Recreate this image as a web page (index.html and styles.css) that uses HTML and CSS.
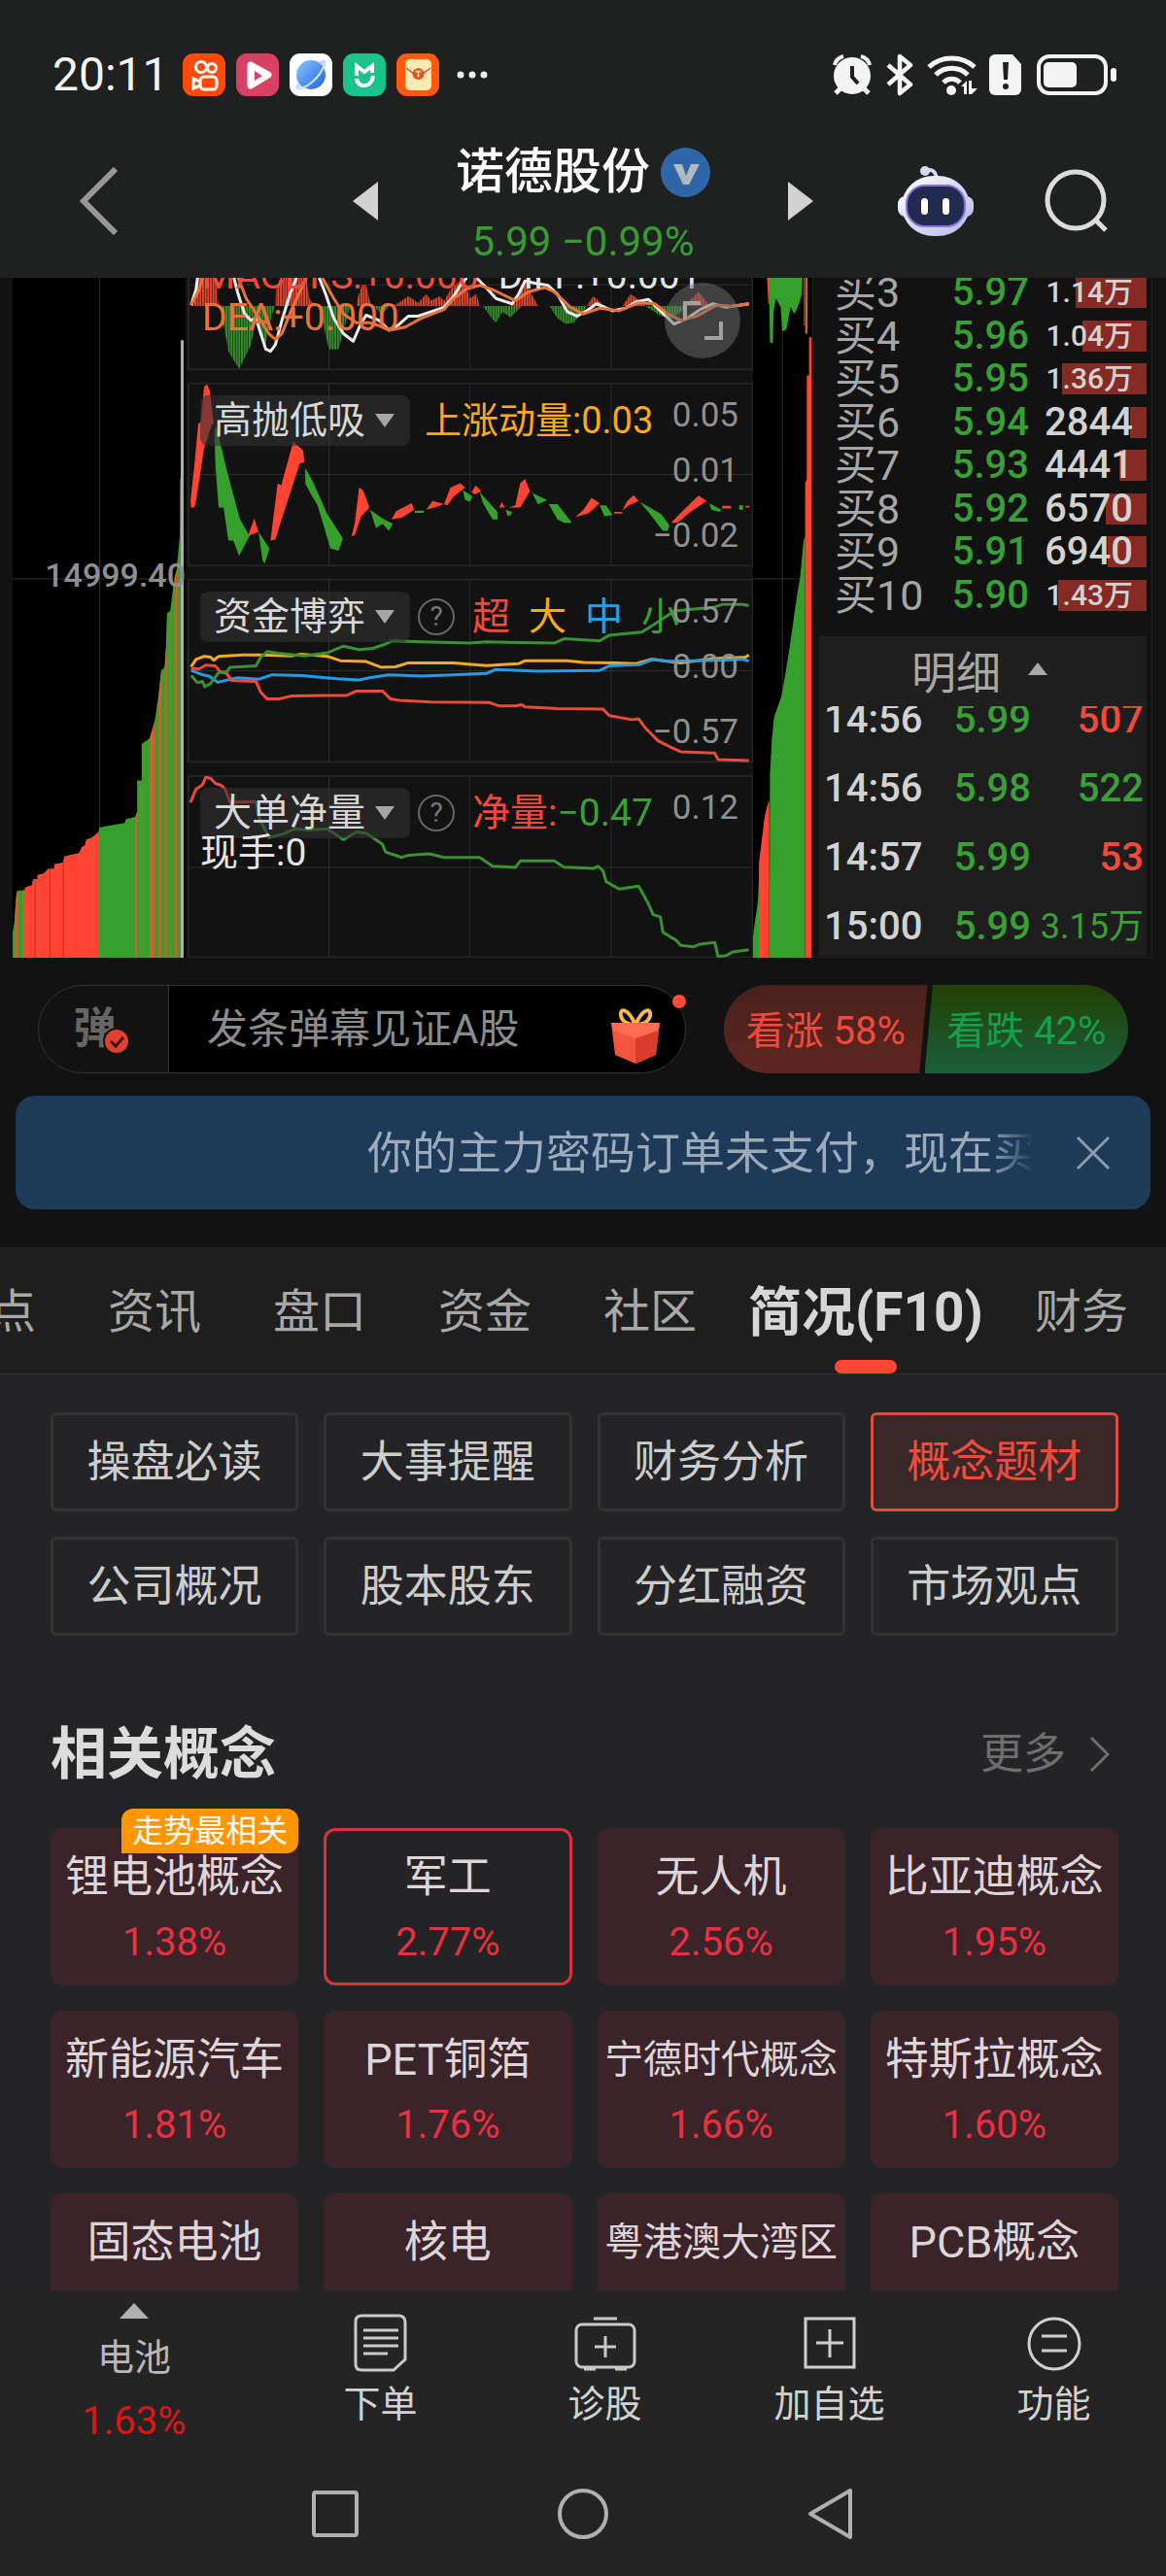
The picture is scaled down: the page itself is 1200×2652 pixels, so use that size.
FILE: index.html
```html
<!DOCTYPE html>
<html lang="zh-CN">
<head>
<meta charset="utf-8">
<meta name="viewport" content="width=device-width, initial-scale=1">
<title>诺德股份</title>
<link rel="stylesheet" href="styles.css">
</head>
<body>
<div class="top">
  <div class="status">
    <span class="clock">20:11</span>
    <svg class="app" viewBox="0 0 44 44"><rect width="44" height="44" rx="11" fill="#ff4a0a"/><g fill="none" stroke="#fff" stroke-width="3"><circle cx="19" cy="14" r="5.5"/><circle cx="30" cy="15" r="4.5"/><rect x="18" y="24" width="17" height="13" rx="4"/><path d="M18 29l-7-3v10l7-3"/></g></svg>
    <svg class="app" viewBox="0 0 44 44"><rect width="44" height="44" rx="11" fill="#d94164"/><path d="M15 12l18 10-18 11z" fill="#fff" stroke="#fff" stroke-width="7" stroke-linejoin="round"/><path d="M19 18l8 5-8 5z" fill="#d94164"/></svg>
    <svg class="app" viewBox="0 0 44 44"><defs><linearGradient id="globe" x1="0" y1="0" x2="1" y2="1"><stop offset="0" stop-color="#8cc8fb"/><stop offset="1" stop-color="#1c62e4"/></linearGradient></defs><rect width="44" height="44" rx="11" fill="#fff"/><ellipse cx="22" cy="22" rx="21" ry="6" transform="rotate(-45 22 22)" fill="#c6dbfb"/><circle cx="22" cy="22" r="15" fill="url(#globe)"/><path d="M9 36c10 0 22-12 27-24" fill="none" stroke="#cfe2ff" stroke-width="2"/></svg>
    <svg class="app" viewBox="0 0 44 44"><rect width="44" height="44" rx="11" fill="#1ac389"/><path d="M14 23V13l8 6 8-6v7M14 26c1 10 16 10 17-3" fill="none" stroke="#fff" stroke-width="4"/></svg>
    <svg class="app" viewBox="0 0 44 44"><rect width="44" height="44" rx="11" fill="#ff5a0c"/><rect x="9" y="6" width="27" height="32" rx="5" fill="#ffeab5"/><path d="M10 15l9 7h7l9-7" fill="none" stroke="#d9541c" stroke-width="1.5"/><circle cx="22.500" cy="21" r="6" fill="#e0531a"/><path d="M19.500 18.500h6M22.500 18.500v6" stroke="#ffeab5" stroke-width="1.500"/></svg>
    <svg class="dots" viewBox="0 0 32 8" fill="#f2f2f2"><circle cx="4" cy="4" r="3.500"/><circle cx="16" cy="4" r="3.500"/><circle cx="28" cy="4" r="3.500"/></svg>
    <svg class="sys" viewBox="0 0 292 44" fill="#f4f4f4">
      <circle cx="20" cy="23" r="19"/><path d="M2 12a12 12 0 0 1 9-9M29 3a12 12 0 0 1 9 9" fill="none" stroke="#f4f4f4" stroke-width="4"/><path d="M8 36l-5 5M32 36l5 5" stroke="#f4f4f4" stroke-width="5"/><path d="M20 13v11l6 7" fill="none" stroke="#1f2120" stroke-width="4"/>
      <path d="M57 12l23 20-11 9V3l11 9-23 20" fill="none" stroke="#f4f4f4" stroke-width="4.500" stroke-linejoin="round"/>
      <g fill="none" stroke="#f4f4f4" stroke-width="5"><path d="M99 14c13-12 34-12 47 0M106 22c9-9 24-9 33 0M114 30c5-5 12-5 17 0"/></g><circle cx="122" cy="38" r="5"/><path d="M132 34l6-6v14h-3v-8zM140 28h3v8h6l-6 6h-3z"/>
      <path d="M167 1h18l9 10v26a6 6 0 0 1-6 6h-21a6 6 0 0 1-6-6V7a6 6 0 0 1 6-6z"/><path d="M175 9h6l-1 18h-4z" fill="#1f2120"/><circle cx="178" cy="34" r="3" fill="#1f2120"/>
      <rect x="212" y="3" width="69" height="38" rx="11" fill="none" stroke="#f4f4f4" stroke-width="4"/><rect x="217" y="9" width="34" height="26" rx="5"/><rect x="286" y="15" width="6" height="14" rx="3"/>
    </svg>
  </div>
  <header class="header">
    <button class="icon-btn back" aria-label="返回"><svg width="40" height="70" viewBox="0 0 40 70" fill="none" stroke="#979797" stroke-width="6"><path d="M37 2L4 35l33 33"/></svg></button>
    <div class="stock">
      <button class="icon-btn" aria-label="上一只"><svg width="26" height="40" viewBox="0 0 26 40"><path d="M26 0v40L0 20z" fill="#d2d2d2"/></svg></button>
      <div class="stock-name">
        <h1>诺德股份<svg width="51" height="51" viewBox="0 0 51 51"><circle cx="25.500" cy="25.500" r="25.500" fill="#2f66a8"/><path d="M13 17h9l4 12 5-12h9L29 38h-6z" fill="#b3b8bc"/></svg></h1>
        <p class="quote">5.99 −0.99%</p>
      </div>
      <button class="icon-btn" aria-label="下一只"><svg width="26" height="40" viewBox="0 0 26 40"><path d="M0 0v40l26-20z" fill="#d2d2d2"/></svg></button>
    </div>
    <div class="tools">
      <button class="icon-btn" aria-label="助手"><svg width="78" height="74" viewBox="0 0 78 74"><defs><linearGradient id="bot" x1="0" y1="0" x2="1" y2="1"><stop offset="0" stop-color="#fff"/><stop offset="1" stop-color="#b9b6ec"/></linearGradient></defs><circle cx="28" cy="6" r="5" fill="#d9d8f2"/><path d="M28 6c8-3 11 1 12 8" fill="none" stroke="#d9d8f2" stroke-width="4"/><rect x="0" y="32" width="78" height="21" rx="8" fill="url(#bot)"/><rect x="4" y="11" width="70" height="62" rx="33" fill="url(#bot)"/><rect x="9" y="21" width="60" height="42" rx="19" fill="#232a50" stroke="#8674de" stroke-width="2"/><rect x="24" y="34" width="7" height="17" rx="3.500" fill="#fff"/><rect x="46" y="34" width="7" height="17" rx="3.500" fill="#fff"/></svg></button>
      <button class="icon-btn" aria-label="搜索"><svg width="66" height="66" viewBox="0 0 66 66" fill="none" stroke="#dcdcdc" stroke-width="5"><circle cx="32" cy="32" r="29"/><path d="M52 52l11 11"/></svg></button>
    </div>
  </header>
</div>

<main>
<section class="charts">
  <div class="depth depth-left">
    <svg viewBox="40 13 533 1545" preserveAspectRatio="none">
      <clipPath id="stairs"><path d="M40 1558V1500L45 1480 52 1410 57 1405H75L80 1398 100 1393 103 1380H117V1370L135 1367 150 1356H167L170 1345 195 1342 200 1328 245 1320 252 1308 263 1302 267 1290 285 1285 305 1272 307 1262 345 1257 385 1252 390 1243 418 1238 424 1225V1155H438V1072L462 1060 468 1045 478 1020 484 990 490 960 498 905 508 898 513 850 516 775 526 770 533 725 540 690 545 680 550 640 555 600 556 470H558V1558z"/></clipPath>
      <path class="grid" d="M308 13V1558M40 697H573"/>
      <g clip-path="url(#stairs)">
        <path fill="#35a02b" d="M40 400H560V1558H40z"/>
        <path fill="#ff4433" d="M75 400H305V1558H75z"/>
        <path fill="#c9622f" d="M46 400h11v1158h-11zM70 400h5v1158h-5zM417 400h8v1158h-8zM436 400h3v1158h-3zM459 400h4v1158h-4zM488 400h11v1158h-11zM510 400h6v1158h-6zM524 400h3v1158h-3zM539 400h9v1158h-9zM474 400h5v1158h-5z"/>
        <path fill="#f2553a" d="M465 400h8v1158h-8z"/>
        <path fill="#b93228" d="M108 400h3v1158h-3zM153 400h3v1158h-3zM195 400h3v1158h-3z"/>
      </g>
      <path fill="#adadad" d="M558 155h9V1558h-9z"/>
    </svg>
    <span class="depth-value">14999.40</span>
  </div>

  <div class="panels">
    <svg class="plot" viewBox="579 13 1744 1545" preserveAspectRatio="none">
      <defs>
        <pattern id="rb" width="8" height="20" patternUnits="userSpaceOnUse"><path fill="#e8452f" d="M0 0h6v20H0z"/></pattern>
        <pattern id="gb" width="8" height="20" patternUnits="userSpaceOnUse"><path fill="#35902b" d="M0 0h6v20H0z"/></pattern>
      </defs>
      <path class="grid" d="M1015 13V222M1450 13V222M1885 13V222M1015 253V667M1450 253V667M1885 253V667M1015 699V1113M1450 699V1113M1885 699V1113M1015 1145V1557M1450 1145V1557M1885 1145V1557M579 29H2323M579 460H2323M579 906H2323M579 1353H2323"/>
      <path class="grid frame" d="M582 13V221H2322V13M582 253H2322V667H582zM582 699H2322V1113H582zM582 1145H2322V1557H582z"/>
      <path fill="url(#rb)" d="M590 77L600 50 610 13H665L675 77zM850 77L852 40 865 13H945L955 60 970 77zM1100 77L1105 55 1118 28 1130 30 1145 77zM1215 77L1260 55 1290 70 1315 50 1330 65 1355 55 1370 65 1395 35 1430 13 1450 60 1470 50 1480 77zM1575 77L1600 60 1620 20 1640 50 1660 77zM1810 77L1830 55 1855 70 1860 77zM1920 77L1945 50 1985 70 1990 77zM2110 77L2155 45 2190 77z"/>
      <path fill="url(#gb)" d="M680 77L705 180 738 220 775 165 790 110 820 165 830 120 848 77zM985 77L1015 175H1045L1065 120 1080 77zM1150 77L1180 95 1200 77zM1490 77L1520 108 1530 115 1550 90 1575 103 1610 77zM1695 77L1720 105 1745 118 1770 115 1800 90 1810 77zM1990 77L2040 100 2070 105 2100 90 2120 77z"/>
      <g class="line">
        <path stroke="#ececec" d="M590 75L605 40 610 13M722 13L735 50 755 95 775 110 790 105 805 140 820 175 835 180 850 165 870 110 895 50 915 13M985 13L1005 50 1030 105 1060 140 1090 157 1115 115 1130 98 1170 110 1200 132 1230 120 1260 100 1290 100 1370 80 1400 55 1420 30 1440 13M1470 13L1500 35 1530 60 1580 72 1600 50 1620 20 1650 25 1690 30 1720 50 1750 90 1780 100 1810 88 1840 72 1890 88 1930 82 1960 68 2000 62 2040 90 2080 118 2120 105 2160 85 2200 72 2240 80 2310 72"/>
        <path stroke="#ec7138" d="M590 75L615 40 625 13M735 13L760 60 800 105 830 140 850 153 870 140 900 85 935 30 945 13M995 13L1030 60 1060 95 1100 115 1140 115 1170 122 1200 132 1250 125 1300 105 1370 85 1400 60 1440 38 1480 30 1520 40 1590 65 1630 45 1680 35 1710 45 1760 80 1800 95 1850 82 1910 88 1970 70 2020 72 2060 95 2100 110 2150 100 2210 75 2260 78 2310 72"/>
      </g>
      <path fill="#ff4433" d="M590 535L588 520 600 440 612 345 620 340 630 260 640 255 648 270 660 345 655 345 630 400 620 450 605 520 600 535zM765 600L785 560 798 590zM835 610L845 550 857 480 868 485 905 385 935 405 940 432 925 435 870 560 850 608zM1060 605L1085 600 1095 570 1108 490 1120 495 1140 535 1115 555 1095 598zM1208 562L1222 543 1270 525 1278 540 1240 558zM1315 540L1335 520 1360 525 1370 527 1340 535zM1370 527L1390 490 1420 480 1435 490 1400 510 1380 530zM1455 500L1468 485 1485 498 1465 505zM1540 535L1548 523 1558 535zM1570 535L1590 530 1605 480 1620 470 1635 498 1605 535zM1775 557L1800 540 1825 513 1850 525 1815 548zM1895 545h25v4h-25zM1920 542L1935 520 1955 507 1970 520 1940 530zM2070 570L2110 540 2155 508 2180 520 2130 545 2090 570zM2228 531h27v6h-27zM2300 531h12v4h-12z"/>
      <path fill="#35a02b" d="M662 360L668 350 700 450 740 560 770 600 738 645 720 610H705L690 535H675L665 440zM798 590L832 628 817 662 810 655zM942 445L965 475 1010 550 1058 605 1045 633 1020 628 980 530 960 505 942 480zM1142 540L1180 560 1212 572 1200 588 1180 572 1160 582zM1280 542h28v5h-28zM1428 495L1458 510 1450 522 1435 518zM1480 500L1535 545V562H1520L1490 525zM1560 540L1580 545 1575 553H1565zM1642 502L1688 518 1660 528zM1693 527H1720L1765 570H1740L1720 562zM1850 530H1870L1890 552 1865 555zM1973 522L2040 550 2065 575 2060 588H2045L2000 545zM2188 525L2225 540 2220 545 2195 540zM2280 530h12v10h-12z"/>
      <g class="line">
        <path stroke="#f3a91c" d="M590 897L605 880 630 873 650 875 660 882 675 873 750 870 800 870 900 872 930 868 1010 873 1050 883 1130 885 1175 898 1220 897 1260 888 1400 888 1500 894 1600 890 1620 883 1750 883 1800 887 1900 888 1960 890 2010 880 2100 888 2200 878 2300 875 2310 870"/>
        <path stroke="#249be8" d="M590 905L625 915 645 918 672 932 730 922 800 925 840 915 930 917 1040 924 1105 927 1140 922 1200 915 1300 918 1400 915 1500 912 1530 903 1660 907 1850 905 1880 895 1970 892 2015 880 2060 884 2220 882 2290 880 2310 884"/>
        <path stroke="#ea4b38" d="M590 900L615 902 635 893 665 895 680 908 700 912 715 928 790 930 805 955 825 970 860 970 900 963 1000 962 1070 962 1100 952 1180 952 1205 970 1230 973 1330 977 1510 978 1540 986 1590 986 1610 983 1620 988 1720 992 1860 993 1880 1008 1950 1017 1970 1015 1990 1035 2030 1065 2070 1080 2100 1090 2205 1093 2215 1108 2310 1110M588 1205L605 1175 625 1165 635 1148 650 1150 665 1162 680 1165 695 1175 710 1205 790 1203"/>
        <path stroke="#37922f" d="M590 917L610 933 625 930 632 942 650 935 675 910 700 908 710 898 790 895 805 875 825 862 860 866 940 872 1010 865 1060 850 1110 858 1150 855 1190 845 1210 838 1300 840 1450 843 1500 840 1600 842 1710 843 1740 833 1850 838 1880 825 1980 818 2030 795 2080 770 2150 765 2200 762 2230 755 2290 755 2310 758M790 1203L800 1240 830 1285 870 1278 910 1265 950 1268 1010 1265 1060 1290 1100 1272 1130 1275 1180 1300 1190 1318 1240 1330 1260 1325 1325 1322 1370 1330 1480 1330 1520 1350 1590 1353 1605 1338 1710 1338 1740 1352 1830 1355 1845 1350 1860 1360 1870 1385 1910 1402 1970 1395 2000 1435 2015 1460 2037 1465 2045 1500 2085 1518 2100 1530 2140 1533 2160 1527 2205 1523 2215 1555 2240 1553 2260 1545 2310 1540"/>
      </g>
    </svg>
    <div class="panel panel-macd">
      <div class="legend"><span class="red">MACDFS:+0.000</span><span class="white">DIFF:+0.001</span><span class="orange">DEA:+0.000</span></div>
      <button class="expand" aria-label="全屏"><svg width="78" height="78" viewBox="0 0 78 78" fill="none" stroke="#a2a2a2" stroke-width="4"><path d="M37 21H21v17M41 57h17V40"/></svg></button>
    </div>
    <div class="panel">
      <div class="row"><button class="chip">高抛低吸<i></i></button><span class="amber">上涨动量:0.03</span></div>
      <div class="axis"><span>0.05</span><span>0.01</span><span>−0.02</span></div>
    </div>
    <div class="panel">
      <div class="row"><button class="chip">资金博弈<i></i></button><button class="help" aria-label="说明">?</button><span class="keys"><b class="red">超</b><b class="amber">大</b><b class="blue">中</b><b class="green">小</b></span></div>
      <div class="axis"><span>0.57</span><span>0.00</span><span>−0.57</span></div>
    </div>
    <div class="panel">
      <div class="row"><button class="chip">大单净量<i></i></button><button class="help" aria-label="说明">?</button><span class="keys"><span class="red">净量:<span class="green">−0.47</span></span></span></div>
      <p class="lots">现手:0</p>
      <div class="axis"><span>0.12</span></div>
    </div>
  </div>

  <div class="depth">
    <svg viewBox="1125 13 182 1545" preserveAspectRatio="none">
      <path class="grid" d="M1215 13V1558M1125 697H1307"/>
      <path fill="#35a02b" d="M1172 13L1175 70 1177 160 1186 162 1188 90 1195 60 1210 80 1215 135 1228 130 1240 80 1252 95 1265 75 1275 50 1277 13zM1125 1558V1510L1130 1480 1140 1430 1145 1340V1558zM1175 1558L1177 1140 1183 1060 1190 1010 1212 965 1225 910 1240 840 1255 760 1270 690 1280 610 1285 600V1558zM1281 13h3v108h-3z"/>
      <path fill="#ff4433" d="M1168 13h7v59h-3zM1143 1558V1345L1152 1290 1160 1240 1168 1215 1175 1200V1558zM1285 1558V480L1290 470V235H1297V148H1305V1558z"/>
      <path fill="#c9622f" d="M1285 13h7v127h-7z"/>
    </svg>
  </div>

  <div class="book">
    <table class="bids">
      <tr><th>买3</th><td class="green">5.97</td><td class="qty small" style="--w:73px">1.14万</td></tr>
      <tr><th>买4</th><td class="green">5.96</td><td class="qty small" style="--w:66px">1.04万</td></tr>
      <tr><th>买5</th><td class="green">5.95</td><td class="qty small" style="--w:87px">1.36万</td></tr>
      <tr><th>买6</th><td class="green">5.94</td><td class="qty" style="--w:17px">2844</td></tr>
      <tr><th>买7</th><td class="green">5.93</td><td class="qty" style="--w:28px">4441</td></tr>
      <tr><th>买8</th><td class="green">5.92</td><td class="qty" style="--w:42px">6570</td></tr>
      <tr><th>买9</th><td class="green">5.91</td><td class="qty" style="--w:40px">6940</td></tr>
      <tr><th>买10</th><td class="green">5.90</td><td class="qty small" style="--w:91px">1.43万</td></tr>
    </table>
    <button class="detail-head">明细<i></i></button>
    <div class="trades">
      <table>
        <tr><th>14:56</th><td class="green">5.99</td><td class="red">507</td></tr>
        <tr><th>14:56</th><td class="green">5.98</td><td class="green">522</td></tr>
        <tr><th>14:57</th><td class="green">5.99</td><td class="red">53</td></tr>
        <tr><th>15:00</th><td class="green">5.99</td><td class="green wan">3.15万</td></tr>
      </table>
    </div>
  </div>
</section>

<section class="social">
  <div class="danmu">
    <button class="danmu-toggle" aria-label="弹幕开关">弹<svg width="28" height="28" viewBox="0 0 28 28"><circle cx="14" cy="14" r="13" fill="#e23f30" stroke="#121212" stroke-width="2"/><path d="M8 14l5 5 8-9" fill="none" stroke="#3c120e" stroke-width="3"/></svg></button>
    <input type="text" aria-label="弹幕" placeholder="发条弹幕见证A股">
    <svg class="gift" width="54" height="58" viewBox="0 0 54 58"><path d="M27 18C18-2 10 2 12 9s8 9 15 9c7 0 13-2 15-9S36-2 27 18z" fill="none" stroke="#f5b94f" stroke-width="4"/><path d="M2 16l25 4 25-4-4 33-21 9-21-9z" fill="#f2553c"/><path d="M27 30v28l21-9 4-33z" fill="#d83c2c"/><path d="M2 16h50l-2 8-23 8-23-8z" fill="#ff6d51"/></svg>
    <i class="dot"></i>
  </div>
  <div class="vote">
    <button class="up">看涨 58%</button>
    <button class="down">看跌 42%</button>
  </div>
</section>

<div class="banner">
  <a href="#order" class="banner-text">你的主力密码订单未支付，现在买</a>
  <button class="icon-btn" aria-label="关闭"><svg width="36" height="36" viewBox="0 0 36 36" fill="none" stroke="#8b9bad" stroke-width="3"><path d="M2 2l32 32M34 2L2 34"/></svg></button>
</div>

<nav class="tabs">
  <a href="#points">点</a><a href="#news">资讯</a><a href="#pk">盘口</a><a href="#money">资金</a><a href="#club">社区</a><a href="#f10" class="active">简况(F10)</a><a href="#fin">财务</a>
</nav>

<section class="content">
  <div class="sub">
    <button>操盘必读</button><button>大事提醒</button><button>财务分析</button><button class="on">概念题材</button>
    <button>公司概况</button><button>股本股东</button><button>分红融资</button><button>市场观点</button>
  </div>
  <div class="heading">
    <h2>相关概念</h2>
    <a href="#more">更多<svg width="22" height="38" viewBox="0 0 22 38" fill="none" stroke="#6e6e6e" stroke-width="3"><path d="M2 2l17 17L2 36"/></svg></a>
  </div>
  <div class="cards">
    <a href="#c1"><em>走势最相关</em><b>锂电池概念</b><span>1.38%</span></a>
    <a href="#c2" class="on"><b>军工</b><span>2.77%</span></a>
    <a href="#c3"><b>无人机</b><span>2.56%</span></a>
    <a href="#c4"><b>比亚迪概念</b><span>1.95%</span></a>
    <a href="#c5"><b>新能源汽车</b><span>1.81%</span></a>
    <a href="#c6"><b>PET铜箔</b><span>1.76%</span></a>
    <a href="#c7"><b class="long">宁德时代概念</b><span>1.66%</span></a>
    <a href="#c8"><b>特斯拉概念</b><span>1.60%</span></a>
    <a href="#c9" class="cut"><b>固态电池</b></a>
    <a href="#c10" class="cut"><b>核电</b></a>
    <a href="#c11" class="cut"><b class="long">粤港澳大湾区</b></a>
    <a href="#c12" class="cut"><b>PCB概念</b></a>
  </div>
</section>
</main>

<footer>
  <nav class="actions">
    <button class="sector"><i></i><span>电池</span><strong>1.63%</strong></button>
    <button><svg width="60" height="60" viewBox="0 0 60 60" fill="none" stroke="#c9c9c9" stroke-width="3"><path d="M10 2h38q7 0 7 7v38l-12 11H10q-6 0-6-6V8q0-6 6-6z"/><path d="M12 17h36M12 25h36M12 33h36M12 41h25"/></svg>下单</button>
    <button><svg width="64" height="60" viewBox="0 0 64 60" fill="none" stroke="#c9c9c9" stroke-width="3"><rect x="2" y="11" width="60" height="44" rx="6"/><path d="M20 5h24M32 23v22M21 34h22M10 57h12M42 57h12"/></svg>诊股</button>
    <button><svg width="60" height="60" viewBox="0 0 60 60" fill="none" stroke="#d0d0d0" stroke-width="3"><path d="M5 5h50v50H5zM30 16v29M16 30h28"/></svg>加自选</button>
    <button><svg width="60" height="60" viewBox="0 0 60 60" fill="none" stroke="#d0d0d0" stroke-width="3"><circle cx="30" cy="31" r="26"/><path d="M17 23h26M17 38h26"/></svg>功能</button>
  </nav>
  <nav class="system">
    <button class="icon-btn" aria-label="最近任务"><svg width="56" height="56" viewBox="0 0 56 56" fill="none" stroke="#b0b0b0" stroke-width="4"><rect x="6" y="6" width="44" height="44" rx="2"/></svg></button>
    <button class="icon-btn" aria-label="主页"><svg width="56" height="56" viewBox="0 0 56 56" fill="none" stroke="#b0b0b0" stroke-width="4"><circle cx="28" cy="28" r="24"/></svg></button>
    <button class="icon-btn" aria-label="返回上级"><svg width="56" height="56" viewBox="0 0 56 56" fill="none" stroke="#b0b0b0" stroke-width="4" stroke-linejoin="round"><path d="M48 4v48L7 28z"/></svg></button>
  </nav>
</footer>
</body>
</html>
```

FILE: styles.css
```css
* { box-sizing: border-box; }
body {
  margin: 0;
  background: #121212;
  color: #d2d2d2;
  font-family: Roboto, "Noto Sans CJK SC", sans-serif;
}
button {
  margin: 0;
  padding: 0;
  border: 0;
  background: none;
  color: inherit;
  font: inherit;
}
a { color: inherit; text-decoration: none; }
h1, h2, p { margin: 0; }
svg { display: block; flex: none; }
.icon-btn { display: flex; align-items: center; justify-content: center; }
.red { color: #f04a3a; }
.green { color: #38a034; }
.white { color: #e4e4e4; }
.orange { color: #ec7138; }
.amber { color: #f9aa18; }
.blue { color: #249ff2; }

/* status bar and stock header */
.top { background: #1f2120; }
.status {
  display: flex;
  align-items: center;
  gap: 11px;
  height: 110px;
  padding: 44px 51px 0 54px;
}
.clock { margin-right: 3px; color: #f4f4f4; font-size: 48px; line-height: 60px; }
.app { width: 44px; height: 44px; }
.dots { width: 32px; height: 8px; margin-left: 7px; }
.sys { width: 292px; height: 44px; margin-left: auto; }
.header {
  display: grid;
  grid-template-columns: 1fr 474px 1fr;
  align-items: center;
  height: 176px;
  padding-top: 18px;
}
.back { justify-self: start; margin-left: 82px; }
.stock { display: flex; align-items: center; justify-content: space-between; }
.stock-name { padding-top: 12px; }
h1 {
  display: flex;
  align-items: center;
  gap: 11px;
  color: #fff;
  font-size: 50px;
  font-weight: 500;
  line-height: 72px;
}
.quote { color: #379b32; font-size: 42px; line-height: 72px; text-align: center; }
.tools { display: flex; justify-content: flex-end; gap: 73px; padding-right: 59px; }

/* charts */
.charts {
  display: grid;
  grid-template-columns: 180fr 582fr 61fr 350fr;
  height: 700px;
  padding: 0 14px 0 13px;
}
.grid { fill: none; stroke: #2e2e2e; stroke-width: 1px; vector-effect: non-scaling-stroke; }
.frame { stroke: #242424; stroke-width: 2px; }
.line path { fill: none; stroke-width: 3px; stroke-linejoin: round; vector-effect: non-scaling-stroke; }
.depth { position: relative; height: 700px; background: #000; }
.depth svg { width: 100%; height: 100%; }
.depth-left { margin-right: 2px; }
.depth-value {
  position: absolute;
  top: 286px;
  right: 0;
  color: #8f8f8f;
  font-size: 34px;
  font-weight: 500;
  line-height: 40px;
}
.panels { position: relative; display: flex; flex-direction: column; gap: 14px; overflow: hidden; }
.plot { position: absolute; inset: 0; width: 100%; height: 100%; }
.panel { position: relative; height: 188px; padding: 13px 0 0 13px; font-size: 39px; line-height: 52px; }
.panel-macd { height: 94px; padding: 0 0 0 15px; }
.legend { display: flex; flex-wrap: wrap; column-gap: 20px; margin-top: -23px; line-height: 43px; }
.expand {
  position: absolute;
  top: 5px;
  right: 13px;
  border-radius: 50%;
  background: rgba(110, 110, 110, 0.5);
}
.row { display: flex; align-items: center; }
.row > .amber { margin-left: 15px; font-size: 38px; }
.chip {
  display: flex;
  align-items: center;
  gap: 10px;
  height: 52px;
  padding: 0 16px 0 14px;
  border-radius: 8px;
  background: rgba(50, 50, 50, 0.6);
  color: #d8d8d8;
}
.chip i { border: 10px solid transparent; border-top: 14px solid #a6a6a6; border-bottom: 0; }
.help {
  width: 38px;
  height: 38px;
  margin: 0 18px 0 8px;
  border: 2px solid #666;
  border-radius: 50%;
  color: #777;
  font-size: 28px;
  line-height: 34px;
}
.keys { display: flex; gap: 19px; }
.keys b { font-weight: 400; }
.axis {
  position: absolute;
  top: 17px;
  right: 15px;
  display: grid;
  grid-template-rows: 57px 67px 34px;
  color: #8f8f8f;
  font-size: 35px;
  line-height: 34px;
  text-align: right;
}
.lots { margin-top: -11px; color: #e4e4e4; line-height: 52px; }

/* order book */
.book {
  display: flex;
  flex-direction: column;
  height: 700px;
  padding: 0 5px 0 6px;
  overflow: hidden;
  border: 1px solid #1f1f1f;
  border-top: 0;
}
table { width: 100%; border-collapse: collapse; table-layout: fixed; }
th, td { padding: 0; font-size: 40px; font-weight: 500; text-align: right; white-space: nowrap; }
th { text-align: left; }
.bids { flex: none; height: 356px; margin: -7px 0 20px; line-height: 44px; }
.bids th { width: 136px; padding-left: 16px; color: #a6a6a6; font-size: 43px; font-weight: 400; }
.bids td { width: 80px; }
.bids .qty {
  width: auto;
  padding-right: 14px;
  background: linear-gradient(#862b24, #862b24) no-repeat right center / var(--w) 32px;
}
.bids .small { font-size: 30px; }
.detail-head {
  display: flex;
  flex: none;
  align-items: center;
  justify-content: center;
  gap: 28px;
  height: 72px;
  padding: 0 7px 5px 0;
  background: #1f1f1f;
  color: #a8a8a8;
  font-size: 46px;
}
.detail-head i { border: 10px solid transparent; border-bottom: 13px solid #a8a8a8; border-top: 0; }
.trades { height: 257px; overflow: hidden; background: #1e1e1e; }
.trades table { height: 284px; margin-top: -22px; line-height: 70px; }
.trades th { width: 116px; padding-left: 5px; }
.trades td { width: 102px; }
.trades td:last-child { width: auto; padding-right: 3px; }
.trades .wan { font-size: 36px; font-weight: 400; }

/* bullet comments and vote */
.social { display: flex; justify-content: space-between; padding: 28px 39px 23px; }
.danmu {
  position: relative;
  display: flex;
  align-items: center;
  width: 667px;
  height: 91px;
  border: 1px solid #333;
  border-radius: 46px;
  background: linear-gradient(90deg, #121212 134px, #000 134px);
}
.danmu-toggle {
  position: relative;
  width: 134px;
  height: 89px;
  padding: 0 18px 10px 0;
  border-right: 1px solid #333;
  color: #666;
  font-size: 44px;
  font-weight: 700;
}
.danmu-toggle svg { position: absolute; left: 66px; top: 43px; }
.danmu input {
  flex: 1;
  min-width: 0;
  height: 80px;
  padding: 0 0 0 39px;
  border: 0;
  outline: 0;
  background: none;
  font: inherit;
  font-size: 42px;
}
.danmu input::placeholder { color: #8c8c8c; opacity: 1; }
.gift { margin: 12px 24px 0 0; }
.dot { position: absolute; top: 9px; right: -1px; width: 14px; height: 14px; border-radius: 50%; background: #ff4a38; }
.vote { display: flex; width: 416px; height: 91px; overflow: hidden; border-radius: 46px; font-size: 40px; }
.vote button { flex: 1; padding-bottom: 4px; }
.vote .up {
  margin-right: -3px;
  background: linear-gradient(#48201c, #5f261f);
  color: #f14a3b;
  clip-path: polygon(0 0, 100% 0, 96% 100%, 0 100%);
}
.vote .down {
  background: linear-gradient(#224004, #1b5e3c);
  color: #14a04b;
  clip-path: polygon(4% 0, 100% 0, 100% 100%, 0 100%);
}

/* notice */
.banner {
  display: flex;
  align-items: center;
  justify-content: flex-end;
  gap: 43px;
  height: 117px;
  margin: 0 16px 39px;
  padding-right: 41px;
  border-radius: 20px;
  background: #1e3a59;
}
.banner-text {
  width: 686px;
  overflow: hidden;
  color: #9cabba;
  font-size: 46px;
  line-height: 70px;
  white-space: nowrap;
  -webkit-mask-image: linear-gradient(90deg, #000 93%, transparent);
  mask-image: linear-gradient(90deg, #000 93%, transparent);
}

/* tabs */
.tabs {
  display: flex;
  gap: 74px;
  height: 131px;
  overflow: hidden;
  border-bottom: 1px solid #333;
  background: #1e1e1e;
  color: #a8a8a8;
  font-size: 48px;
  line-height: 134px;
  white-space: nowrap;
}
.tabs a { position: relative; flex: none; height: 130px; }
.tabs a:first-child { margin-left: -11px; }
.tabs .active {
  margin: 0 -21px;
  color: #d6d6d6;
  font-size: 55px;
  font-weight: 700;
}
.tabs .active::after {
  content: "";
  position: absolute;
  bottom: 0;
  left: calc(50% - 32px);
  width: 64px;
  height: 14px;
  border-radius: 7px;
  background: #ff4632;
}

/* F10 content */
.content { padding: 39px 49px 0 52px; background: #242426; }
.sub, .cards { display: grid; grid-template-columns: repeat(4, 1fr); gap: 26px; }
.sub button { height: 102px; padding-bottom: 7px; border: 3px solid #323232; border-radius: 6px; color: #cdcdcd; font-size: 45px; }
.sub .on { border-color: #e04c3b; background: #3a2727; color: #f04a3a; }
.heading {
  display: flex;
  align-items: center;
  justify-content: space-between;
  margin: 82px 0 36px;
  line-height: 80px;
}
h2 { color: #dcdcdc; font-size: 58px; font-weight: 700; }
.heading a { display: flex; align-items: center; gap: 24px; padding-right: 8px; color: #6e6e6e; font-size: 44px; }
.cards a {
  position: relative;
  display: flex;
  flex-direction: column;
  align-items: center;
  height: 162px;
  padding-top: 17px;
  border-radius: 12px;
  background: #3a2429;
  white-space: nowrap;
}
.cards b { color: #ddd5d7; font-size: 45px; font-weight: 400; line-height: 68px; }
.cards .long { font-size: 40px; }
.cards span { color: #ea303e; font-size: 40px; line-height: 66px; }
.cards .on { padding-top: 14px; border: 3px solid #dc303e; background: none; }
.cards .cut { height: 100px; border-radius: 12px 12px 0 0; }
.cards em {
  position: absolute;
  top: -20px;
  right: 0;
  padding: 0 11px;
  border-radius: 12px 12px 12px 0;
  background: #ff9500;
  color: #fff;
  font-size: 32px;
  font-style: normal;
  line-height: 46px;
}

/* bottom bars */
footer { background: #242424; }
.actions { display: grid; grid-template-columns: 276fr 231fr 231fr 231fr 231fr; height: 160px; }
.actions button {
  display: flex;
  flex-direction: column;
  align-items: center;
  padding-top: 24px;
  font-size: 38px;
  line-height: 66px;
}
.actions .sector { padding-top: 13px; color: #b8b8b8; }
.sector i { border: 15px solid transparent; border-bottom: 16px solid #b0b0b0; border-top: 0; }
.sector span { margin-top: 7px; }
.sector strong { color: #e01414; font-size: 40px; font-weight: 400; }
.system { display: flex; justify-content: center; gap: 199px; padding: 42px 0 36px; }
```
